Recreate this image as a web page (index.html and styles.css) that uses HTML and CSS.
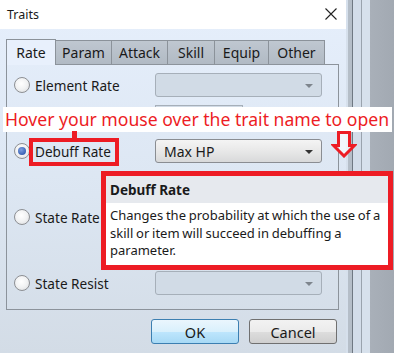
FILE: index.html
```html
<!DOCTYPE html>
<html lang="en">
<head>
    <meta charset="UTF-8">
    <title>Traits</title>
    <link rel="stylesheet" href="styles.css">
</head>
<body>
<div class="screen">
    <div class="window">
        <div class="titlebar">
            <span class="title">Traits</span>
            <svg class="close" width="12" height="12" viewBox="0 0 12 12">
                <path d="M0.5 0.5 L11.5 11.5 M11.5 0.5 L0.5 11.5" stroke="#222" stroke-width="1.1" fill="none"/>
            </svg>
        </div>

        <div class="client">
            <div class="tabs">
                <div class="tab active">Rate</div>
                <div class="tab">Param</div>
                <div class="tab">Attack</div>
                <div class="tab">Skill</div>
                <div class="tab">Equip</div>
                <div class="tab">Other</div>
            </div>

            <div class="panel">
                <div class="trait">
                    <label class="radio"><span class="circle"></span>Element Rate</label>
                    <div class="combo disabled"><span class="caret"></span></div>
                    <div class="spin disabled"></div>
                </div>
                <div class="trait">
                    <label class="radio"><span class="circle checked"></span>Debuff Rate</label>
                    <div class="combo">Max HP<span class="caret"></span></div>
                    <div class="spin"></div>
                </div>
                <div class="trait">
                    <label class="radio"><span class="circle"></span>State Rate</label>
                    <div class="combo disabled"><span class="caret"></span></div>
                    <div class="spin disabled"></div>
                </div>
                <div class="trait">
                    <label class="radio"><span class="circle"></span>State Resist</label>
                    <div class="combo disabled"><span class="caret"></span></div>
                </div>
            </div>

            <div class="buttons">
                <button class="btn default">OK</button>
                <button class="btn">Cancel</button>
            </div>
        </div>
    </div>
    <div class="frame"></div>

    <!-- annotations drawn over the dialog -->
    <div class="note">Hover your mouse over the trait name to open</div>
    <div class="note-stem"></div>
    <div class="note-box"></div>
    <svg class="note-arrow" width="26" height="27" viewBox="0 0 26 27">
        <path d="M7.5 1.5 H18.5 V14.5 H23.5 L13 25 L2.5 14.5 H7.5 Z" fill="#fff" fill-opacity="0.6" stroke="#ed1c24" stroke-width="3" stroke-linejoin="miter"/>
    </svg>

    <div class="tooltip">
        <div class="tooltip-head">Debuff Rate</div>
        <div class="tooltip-body">Changes the probability at which the use of a skill or item will succeed in debuffing a parameter.</div>
    </div>
</div>
</body>
</html>
```

FILE: styles.css
```css
:root {
    --red: #ed1c24;
    --border: #8c939b;
    --text: #1a1a1a;
}

body {
    margin: 0;
    font-family: 'Noto Sans', 'Open Sans', sans-serif;
    font-size: 13px;
    color: var(--text);
}

.screen {
    position: relative;
    display: flex;
    width: 394px;
    height: 353px;
    overflow: hidden;
}

.window {
    width: 346px;
    height: 353px;
    background: linear-gradient(180deg, #e6effc 0%, #dce6f2 55%, #d3dce6 100%);
}

.frame {
    flex: 1;
    background: linear-gradient(90deg,
        #d6e0ec 0, #d6e0ec 2px,
        #b5bec8 2px, #b5bec8 6px,
        #6f7882 6px, #6f7882 7px,
        #d3dde9 7px, #d3dde9 15px,
        #9aa3ad 15px, #9aa3ad 16px,
        #d7e1ec 16px, #d7e1ec 24px,
        #a9b0b9 24px, #a2a9b2 100%);
}

/* title bar */
.titlebar {
    height: 29px;
    background: #fff;
    display: flex;
    align-items: center;
    justify-content: space-between;
    padding: 0 9px 0 7px;
}

.title {
    font-size: 12.5px;
    margin-top: -1px;
}

.close {
    margin-top: -1px;
}

/* tabs */
.client {
    padding-top: 10px;
}

.tabs {
    display: flex;
    margin-left: 6px;
    height: 25px;
    align-items: flex-end;
    position: relative;
    z-index: 1;
}

.tab {
    height: 23px;
    display: flex;
    align-items: center;
    justify-content: center;
    background: linear-gradient(180deg, #bfc7d0 0%, #b1bac4 100%);
    border: 1px solid #8b929a;
    border-bottom: none;
    margin-right: -1px;
    font-size: 14px;
}

.tab:nth-child(1) { width: 48px; }
.tab:nth-child(2) { width: 55px; }
.tab:nth-child(3) { width: 55px; }
.tab:nth-child(4) { width: 46px; }
.tab:nth-child(5) { width: 53px; }
.tab:nth-child(6) { width: 55px; }

.tab.active {
    height: 25px;
    background: #e8f0fc;
    margin-bottom: -1px;
    z-index: 2;
}

/* panel */
.panel {
    box-sizing: border-box;
    margin-left: 6px;
    width: 333px;
    height: 246px;
    border: 1px solid var(--border);
    padding: 8px 0 0 7px;
}

.trait {
    display: grid;
    grid-template-columns: 141px 167px;
    grid-template-rows: 24px 24px;
    row-gap: 8px;
    margin-bottom: 10px;
}

.radio {
    display: flex;
    align-items: center;
    gap: 5px;
    font-size: 13.6px;
}

.circle {
    box-sizing: border-box;
    flex: none;
    width: 16px;
    height: 16px;
    border-radius: 50%;
    border: 1px solid #8d8f93;
    background: radial-gradient(circle at 45% 40%, #ffffff 0%, #f1f2f3 50%, #d6d8db 100%);
    position: relative;
}

.circle.checked::after {
    content: '';
    position: absolute;
    left: 3px;
    top: 3px;
    width: 8px;
    height: 8px;
    border-radius: 50%;
    background: radial-gradient(circle at 40% 35%, #7e9fe0 0%, #3b63b5 70%, #2e4f99 100%);
}

.combo {
    box-sizing: border-box;
    position: relative;
    height: 24px;
    border: 1px solid #8a8d92;
    border-radius: 3px;
    background: linear-gradient(180deg, #f4f4f4 0%, #e8e8e8 50%, #d8d9da 100%);
    padding-left: 8px;
    display: flex;
    align-items: center;
    font-size: 14px;
}

.combo.disabled {
    background: #d1dbe6;
    border-color: #a6afb9;
}

.caret {
    position: absolute;
    right: 8px;
    top: 10px;
    border-left: 4px solid transparent;
    border-right: 4px solid transparent;
    border-top: 4px solid #333;
}

.combo.disabled .caret {
    border-top-color: #7e858d;
}

.spin {
    grid-column: 2;
    box-sizing: border-box;
    width: 88px;
    height: 24px;
    border: 1px solid #a6afb9;
    background: #d1dbe6;
}

/* buttons */
.buttons {
    display: flex;
    justify-content: flex-end;
    gap: 10px;
    padding: 9px 9px 0 0;
}

.btn {
    width: 88px;
    height: 25px;
    font-family: inherit;
    font-size: 14.5px;
    color: var(--text);
    border: 1px solid #707070;
    border-radius: 3px;
    background: linear-gradient(180deg, #f2f2f2 0%, #ebebeb 50%, #dddddd 51%, #cfcfcf 100%);
    padding: 0;
}

.btn.default {
    border-color: #3c7fb1;
    background: linear-gradient(180deg, #eaf6fd 0%, #d9f0fc 50%, #bee6fd 51%, #a7d9f5 100%);
}

/* annotations */
.note {
    position: absolute;
    left: 3px;
    top: 107px;
    width: 389px;
    height: 25px;
    background: #fff;
    color: var(--red);
    font-size: 17.6px;
    line-height: 25px;
    padding-left: 2px;
    box-sizing: border-box;
    white-space: nowrap;
}

.note-stem {
    position: absolute;
    left: 72px;
    top: 131px;
    width: 5px;
    height: 8px;
    background: var(--red);
}

.note-box {
    position: absolute;
    left: 29px;
    top: 138px;
    width: 90px;
    height: 28px;
    box-sizing: border-box;
    border: 4px solid var(--red);
}

.note-arrow {
    position: absolute;
    left: 331px;
    top: 131px;
}

.tooltip {
    position: absolute;
    left: 101px;
    top: 171px;
    width: 292px;
    height: 99px;
    box-sizing: border-box;
    border: 5px solid var(--red);
    background: #fff;
}

.tooltip-head {
    height: 27px;
    background: #e6e9ee;
    font-weight: bold;
    font-size: 13.5px;
    display: flex;
    align-items: center;
    padding-left: 4px;
}

.tooltip-body {
    padding: 4px 0 0 4px;
    font-size: 13px;
    word-spacing: -0.6px;
    line-height: 17.5px;
}
```
